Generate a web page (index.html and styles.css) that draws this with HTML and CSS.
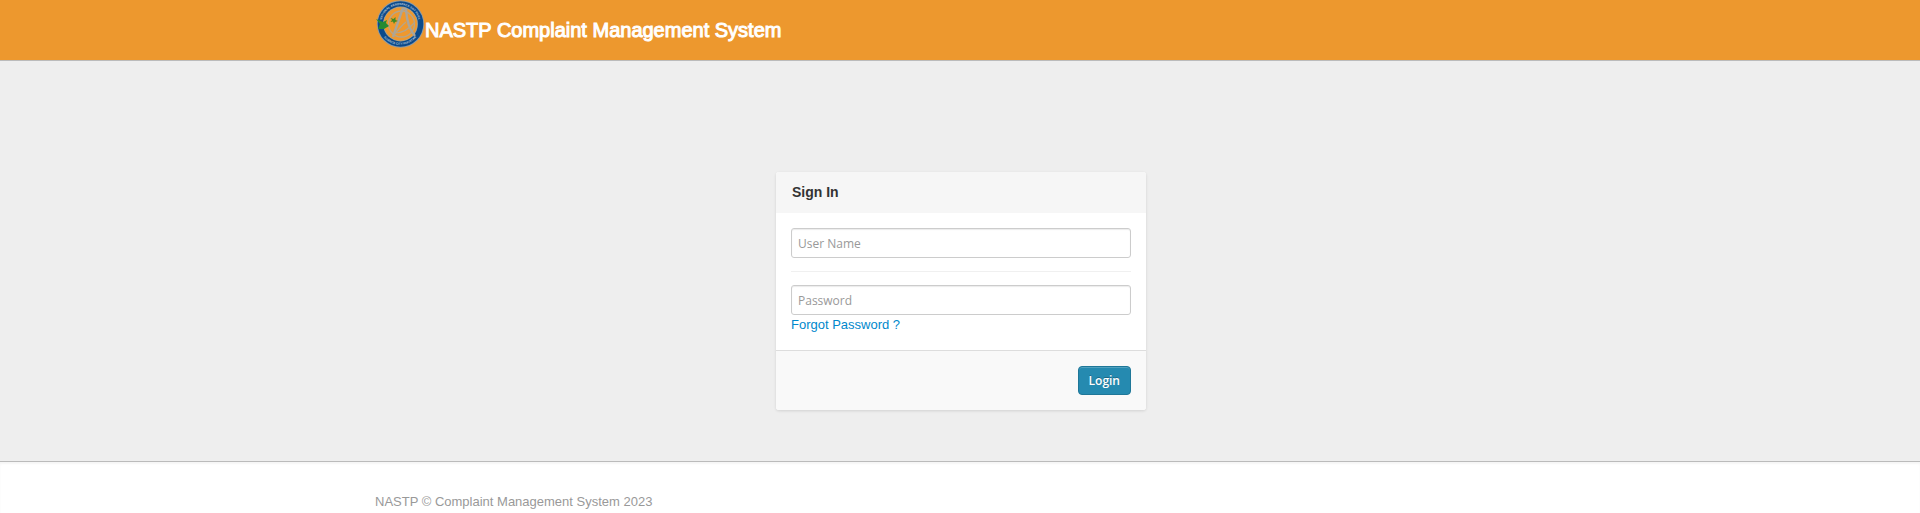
FILE: index.html
```
<!DOCTYPE html>
<html lang="en">
<head>
<meta charset="utf-8">
<title>NASTP Complaint Management System</title>
<link rel="stylesheet" href="styles.css">
</head>
<body>
<header class="navbar">
  <div class="container">
    <a class="brand" href="#">
      <svg class="logo" viewBox="0 0 50 50" aria-hidden="true">
        <defs>
          <path id="arc-top" d="M7.400 30 A18.700 18.700 0 1 1 42.600 30"/>
          <path id="arc-bottom" d="M6 33 A21.200 21.200 0 0 0 44 33"/>
        </defs>
        <circle cx="25.500" cy="24" r="23.700" fill="#8f9ba3"/>
        <circle cx="25.500" cy="24" r="22.800" fill="#0b4a8b"/>
        <circle cx="25.500" cy="24" r="17.400" fill="#a9a28e"/>
        <circle cx="25.500" cy="24" r="16.600" fill="#ee982e"/>
        <circle cx="26.500" cy="24" r="13" fill="none" stroke="#b5a58a" stroke-width="1.300"/>
        <path d="M18 37 L27.500 9 L31 9 Q32 27 40 36" fill="none" stroke="#aaa59b" stroke-width="2.400" stroke-linejoin="round"/>
        <path d="M18 36 Q27 25 31 22 M20 33 Q31 33 40 22" fill="none" stroke="#b5a58a" stroke-width="1.200"/>
        <path d="M1 19 L8 22 L12 20 L11 23 L14 26 L9 29 L3 29 L5 24 Z" fill="#238a32"/>
        <path d="M15.500 18 L18.500 19 L20.500 17 L20.500 20 L23 21 L20 22 L19 24 L18 21.500 L15.500 22 L17 20 Z" fill="#3d8b25"/>
        <text class="logo-text"><textPath href="#arc-top" startOffset="50%">NATIONAL AEROSPACE SNT PARK</textPath></text>
        <text class="logo-text"><textPath href="#arc-bottom" startOffset="50%">SCIENCE CITY PAKISTAN</textPath></text>
      </svg>
      <span class="brand-name">NASTP Complaint Management System</span>
    </a>
  </div>
</header>
<main class="wrapper">
  <form class="login">
    <h1 class="login-head">Sign In</h1>
    <div class="login-body">
      <input class="field" type="text" placeholder="User Name" aria-label="User Name">
      <div class="divider"></div>
      <input class="field" type="password" placeholder="Password" aria-label="Password">
      <a class="forgot" href="#">Forgot Password ?</a>
    </div>
    <div class="login-foot">
      <button class="btn" type="submit">Login</button>
    </div>
  </form>
</main>
<footer class="footer">
  <div class="container">NASTP © Complaint Management System 2023</div>
</footer>
</body>
</html>
```
FILE: styles.css
```
* { box-sizing: border-box; }
body {
  margin: 0;
  min-height: 100vh;
  display: flex;
  flex-direction: column;
  background: #fff;
  font: 13px/20px "Liberation Sans", Arial, sans-serif;
  color: #333;
}
.container { width: 100%; max-width: 1170px; margin: 0 auto; }
.navbar {
  background: #ed982e;
  border-bottom: 1px solid #bbb;
}
.brand {
  display: flex;
  align-items: flex-start;
  height: 60px;
  width: fit-content;
  color: #fff;
  text-decoration: none;
}
.logo { width: 50px; height: 50px; flex: none; overflow: visible; }
.logo-text {
  font: bold 3px "Liberation Sans", Arial, sans-serif;
  fill: #b4c4d6;
  text-anchor: middle;
}
.brand-name {
  padding-top: 20px;
  font-size: 20px;
  line-height: 20px;
  -webkit-text-stroke: 1px #fff;
}
.wrapper {
  flex: none;
  padding: 111px 15px 51px 17px;
  background: #eee;
  border-bottom: 1px solid #bbb;
}
.login {
  width: 100%;
  max-width: 370px;
  margin: 0 auto;
  background: #fff;
  border-radius: 3px;
  overflow: hidden;
  box-shadow: 0 1px 3px rgba(0, 0, 0, 0.12);
}
.login-head {
  margin: 0;
  padding: 10px 16px 11px;
  background: #f6f6f6;
  font: bold 14px/20px "Liberation Sans", Arial, sans-serif;
  color: #333;
}
.login-body { padding: 15px; }
.field {
  display: block;
  width: 100%;
  height: 30px;
  padding: 4px 6px;
  border: 1px solid #ccc;
  border-radius: 3px;
  box-shadow: inset 0 1px 1px rgba(0, 0, 0, 0.08);
  background: #fff;
  font: 12px/20px "Open Sans", sans-serif;
  color: #555;
}
.field::placeholder { color: #999; opacity: 1; }
.divider { height: 1px; margin: 13px 0; background: #f0f0f0; }
.forgot { display: block; width: fit-content; color: #08c; text-decoration: none; }
.login-foot {
  display: flex;
  justify-content: flex-end;
  padding: 15px;
  background: #f9f9f9;
  border-top: 1px solid #ddd;
}
.btn {
  height: 29px;
  padding: 0 10px;
  border: 1px solid #1f7798;
  border-radius: 4px;
  background: #258ab0;
  box-shadow: inset 0 1px 0 rgba(255, 255, 255, 0.2);
  font: 600 12px/20px "Open Sans", sans-serif;
  color: #fff;
  text-shadow: 0 -1px 0 rgba(0, 0, 0, 0.25);
}
.footer {
  flex: 1;
  padding: 30px 0 2px;
  box-shadow: inset 0 2px 2px rgba(0, 0, 0, 0.04);
  color: #999;
}
```
